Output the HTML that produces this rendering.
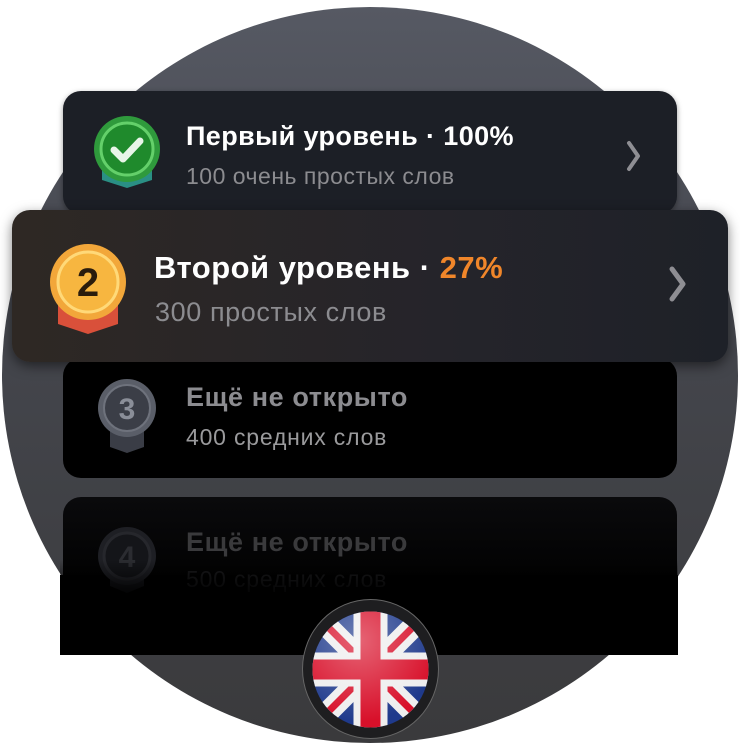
<!DOCTYPE html>
<html><head><meta charset="utf-8"><style>
*{margin:0;padding:0;box-sizing:border-box}
body{width:740px;height:740px;background:#fff;position:relative;overflow:hidden;font-family:"Liberation Sans","Noto Sans CJK SC",sans-serif}
.circle{position:absolute;left:2px;top:7px;width:736px;height:736px;border-radius:50%;background:linear-gradient(#565963,#45474e 40%,#3a3a3c)}
.card{position:absolute;border-radius:18px}
.t{position:absolute;font-weight:bold;white-space:nowrap}
.s{position:absolute;white-space:nowrap}
.chev{position:absolute}
</style></head><body>
<div class="circle"></div>
<!-- card4 -->
<div class="card" style="left:63px;top:497px;width:614px;height:158px;background:linear-gradient(#0a0a0c,#000 60%)"></div>
<div style="position:absolute;left:60px;top:575px;width:618px;height:80px;background:#000"></div>
<svg style="position:absolute;left:92px;top:518px" width="70" height="80"><path d="M18 45 L18 68 L35 75 L52 68 L52 45Z" fill="#15161a"/><circle cx="35" cy="38" r="29" fill="#1e1f24"/><circle cx="35" cy="38" r="23" fill="#141519" stroke="#26272c" stroke-width="3"/><text x="35" y="49" text-anchor="middle" font-family="Liberation Sans" font-weight="bold" font-size="30" fill="#2b2c31">4</text></svg>
<div class="t" style="left:186px;top:527px;font-size:27px;letter-spacing:.6px;color:#3a3a3c">Ещё не открыто</div>
<div class="s" style="left:186px;top:566px;font-size:23px;letter-spacing:.8px;color:#1a1a1c">500 средних слов</div>
<div style="position:absolute;left:60px;top:560px;width:618px;height:40px;background:linear-gradient(rgba(0,0,0,0),#000)"></div>
<!-- card3 -->
<div class="card" style="left:63px;top:358px;width:614px;height:120px;background:#000"></div>
<svg style="position:absolute;left:92px;top:375px" width="70" height="80"><path d="M18 40 L18 72 L35 78 L52 72 L52 40Z" fill="#3a3d46"/><circle cx="35" cy="33" r="29" fill="#5a5e68"/><circle cx="35" cy="33" r="23" fill="#3b3e47" stroke="#6e727c" stroke-width="2"/><text x="35" y="44" text-anchor="middle" font-family="Liberation Sans" font-weight="bold" font-size="30" fill="#8a8e98">3</text></svg>
<div class="t" style="left:186px;top:382px;font-size:27px;letter-spacing:.6px;color:#8c8c90">Ещё не открыто</div>
<div class="s" style="left:186px;top:424px;font-size:23px;letter-spacing:.8px;color:#9a9a9c">400 средних слов</div>
<!-- card1 -->
<div class="card" style="left:63px;top:91px;width:614px;height:123px;background:#1c1f26;box-shadow:0 2px 6px rgba(0,0,0,.4)"></div>
<svg style="position:absolute;left:92px;top:114px" width="70" height="80"><path d="M10 40 L10 66 L35 74 L60 66 L60 40Z" fill="#2a8f84"/><circle cx="35" cy="35" r="33" fill="#2f9a3c"/><circle cx="35" cy="35" r="26" fill="#1f8a2c" stroke="#64d06a" stroke-width="3"/><path d="M22 36 L31 45 L48 27" fill="none" stroke="#e8f5e8" stroke-width="7" stroke-linecap="round" stroke-linejoin="round"/></svg>
<div class="t" style="left:186px;top:121px;font-size:27px;letter-spacing:.4px;color:#fff">Первый уровень · 100%</div>
<div class="s" style="left:186px;top:163px;font-size:23px;letter-spacing:.5px;color:#8c8c90">100 очень простых слов</div>
<svg class="chev" style="left:624px;top:139px" width="20" height="34"><path d="M5 4 L14 17 L5 30" fill="none" stroke="#8e8e93" stroke-width="4" stroke-linecap="round" stroke-linejoin="round"/></svg>
<!-- card2 -->
<div class="card" style="left:12px;top:210px;width:716px;height:152px;background:linear-gradient(90deg,#2e2824,#25242a 60%,#1e2128);box-shadow:0 4px 12px rgba(0,0,0,.5)"></div>
<svg style="position:absolute;left:48px;top:244px" width="84" height="95"><path d="M10 50 L10 80 L40 90 L70 80 L70 50Z" fill="#d9503a"/><circle cx="40" cy="38" r="38" fill="#f2a73a"/><circle cx="40" cy="38" r="30" fill="#f7b640" stroke="#ffd978" stroke-width="3"/><text x="40" y="52" text-anchor="middle" font-family="Liberation Sans" font-weight="bold" font-size="40" fill="#2a1c0c">2</text></svg>
<div class="t" style="left:154px;top:250px;font-size:31px;letter-spacing:.5px;color:#fff">Второй уровень · <span style="color:#f0862a">27%</span></div>
<div class="s" style="left:155px;top:297px;font-size:27px;letter-spacing:.6px;color:#8c8c90">300 простых слов</div>
<svg class="chev" style="left:666px;top:264px" width="24" height="40"><path d="M6 5 L17 20 L6 35" fill="none" stroke="#8e8e93" stroke-width="5" stroke-linecap="round" stroke-linejoin="round"/></svg>
<!-- flag -->
<div style="position:absolute;left:302px;top:599px;width:137px;height:140px;border-radius:50%;background:#1e1e20;border:1px solid #666"></div>
<svg style="position:absolute;left:312px;top:611px" width="117" height="117"><defs><clipPath id="c"><circle cx="58.5" cy="58.5" r="58"/></clipPath><radialGradient id="g" cx="40%" cy="25%" r="70%"><stop offset="0" stop-color="#fff" stop-opacity=".35"/><stop offset="1" stop-color="#fff" stop-opacity="0"/></radialGradient></defs><g clip-path="url(#c)"><rect width="117" height="117" fill="#1f3a8c"/><path d="M0 0 L117 117 M117 0 L0 117" stroke="#eee" stroke-width="22"/><path d="M0 0 L117 117 M117 0 L0 117" stroke="#d8102a" stroke-width="7"/><path d="M58.5 0 V117 M0 58.5 H117" stroke="#eee" stroke-width="34"/><path d="M58.5 0 V117 M0 58.5 H117" stroke="#d8102a" stroke-width="20"/><circle cx="58.5" cy="58.5" r="58" fill="url(#g)"/></g></svg>
</body></html>
